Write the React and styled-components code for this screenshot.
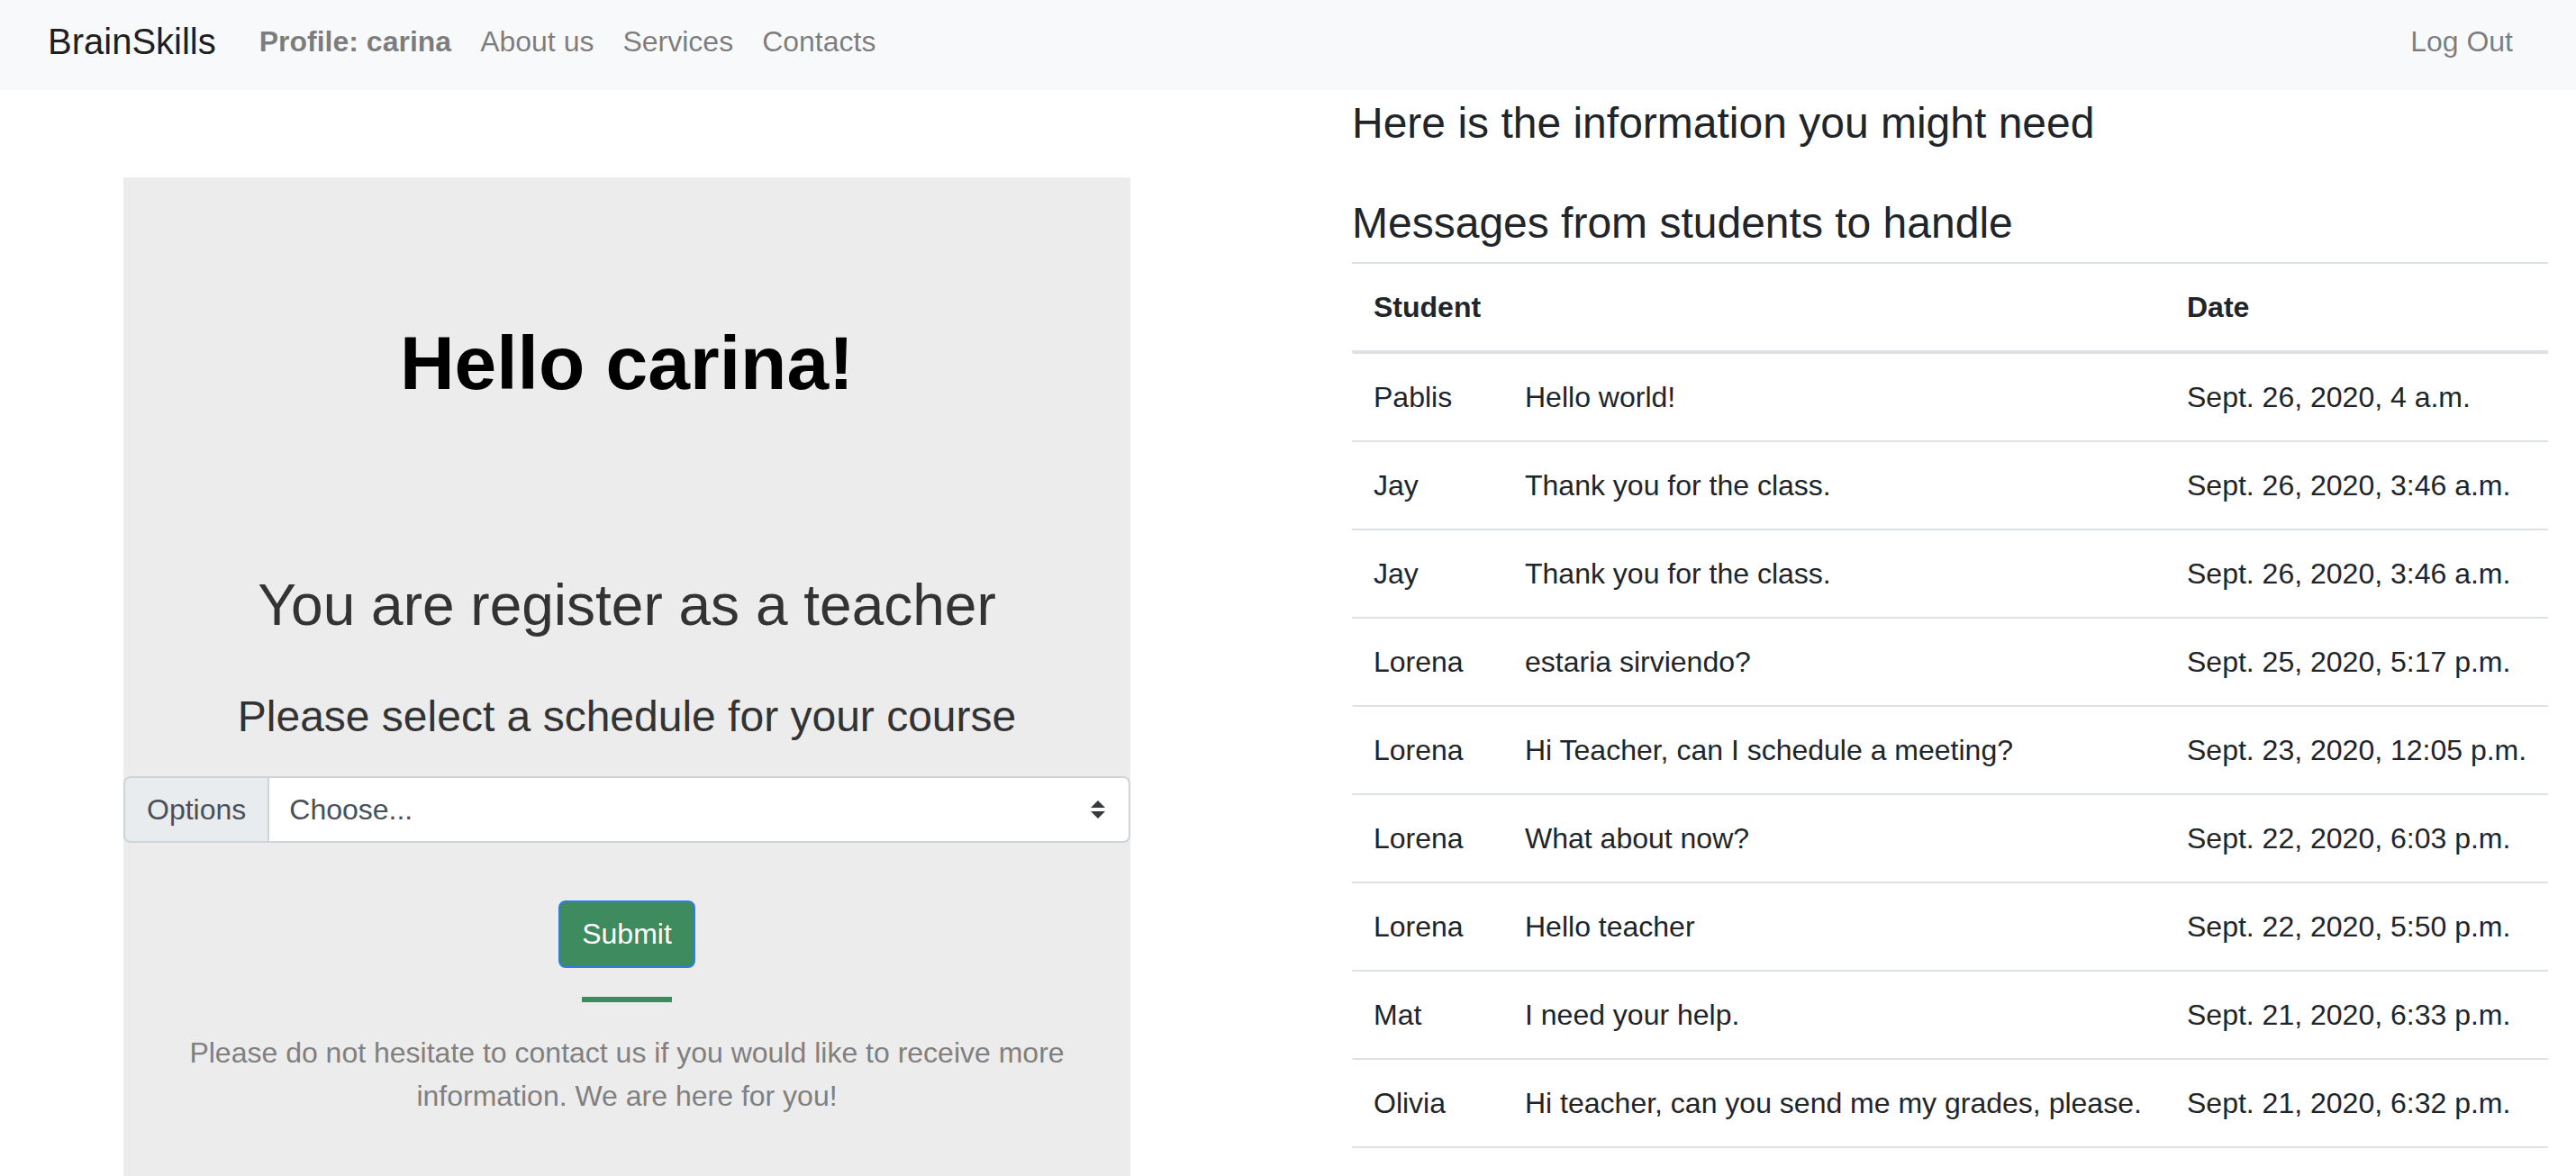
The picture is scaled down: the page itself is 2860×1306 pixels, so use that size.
import React from 'react';
import styled, { createGlobalStyle } from 'styled-components';

const GlobalStyle = createGlobalStyle`
  html { font-size: 32px; }
  body {
    margin: 0;
    font-family: "Liberation Sans", Arial, Helvetica, sans-serif;
    color: #212529;
    line-height: 1.5;
    background: #fff;
  }
  * { box-sizing: border-box; }
`

const Navbar = styled.nav`
  display: flex;
  align-items: center;
  height: 100px;
  padding: 0 54px 9px 53px;
  background-color: #f8f9fa;
`
const Brand = styled.a`
  font-size: 40px;
  color: rgba(0, 0, 0, 0.9);
  margin-right: 32px;
  text-decoration: none;
  line-height: 1.5;
`
const NavLink = styled.a`
  padding: 0 16px;
  font-size: 32px;
  color: rgba(0, 0, 0, 0.5);
  font-weight: ${(props) => (props.bold ? 'bold' : 'normal')};
  margin-left: ${(props) => (props.push ? 'auto' : '0')};
  text-decoration: none;
`

const Main = styled.main`
  display: flex;
  align-items: flex-start;
`
const LeftCol = styled.section`
  padding-left: 137px;
`
const Panel = styled.div`
  width: 1118px;
  margin-top: 97px;
  padding: 156px 0 120px;
  background-color: #ececec;
  text-align: center;
`
const Hello = styled.h1`
  margin: 0;
  font-size: 84px;
  line-height: 100px;
  font-weight: bold;
  color: #000;
`
const Heading = styled.h2`
  margin: ${(props) => props.margin || '0'};
  font-size: ${(props) => props.size || '48px'};
  line-height: 1.2;
  font-weight: 500;
  color: ${(props) => props.color || '#212529'};
`

const InputGroup = styled.div`
  display: flex;
  height: 74px;
  margin-top: 38px;
  text-align: left;
`
const Prepend = styled.div`
  display: flex;
  align-items: center;
  padding: 0 24px;
  background-color: #e9ecef;
  border: 2px solid #ced4da;
  border-radius: 8px 0 0 8px;
  color: #495057;
  font-size: 32px;
`
const Select = styled.div`
  flex: 1;
  display: flex;
  align-items: center;
  justify-content: space-between;
  padding: 0 26px 0 22px;
  background-color: #fff;
  border: 2px solid #ced4da;
  border-left: none;
  border-radius: 0 8px 8px 0;
  color: #495057;
  font-size: 32px;
`

const Button = styled.button`
  display: block;
  margin: 64px auto 0;
  height: 75px;
  padding: 0 24px;
  font-family: inherit;
  font-size: 32px;
  color: #fff;
  background-color: #3d8b5f;
  border: 2px solid #2f7ce8;
  border-radius: 8px;
`
const Divider = styled.div`
  width: 100px;
  height: 6px;
  margin: 32px auto 0;
  background-color: #3d8b5f;
`
const Note = styled.p`
  margin: 32px auto 0;
  padding: 0 48px;
  font-size: 32px;
  line-height: 48px;
  color: #808080;
`

const RightCol = styled.section`
  width: 1328px;
  margin-left: 246px;
`
const Table = styled.table`
  width: 100%;
  border-collapse: collapse;
  table-layout: fixed;
  font-size: 32px;
  line-height: 48px;
  color: #212529;
`
const Th = styled.th`
  text-align: left;
  padding: 24px;
  font-weight: bold;
  border-top: 2px solid #dee2e6;
  border-bottom: 4px solid #dee2e6;
`
const Td = styled.td`
  padding: 24px;
  border-top: 2px solid #dee2e6;
  white-space: nowrap;
  vertical-align: top;
`
const LastRow = styled.tr`
  border-bottom: 2px solid #dee2e6;
`

const messages = [
  ['Pablis', 'Hello world!', 'Sept. 26, 2020, 4 a.m.'],
  ['Jay', 'Thank you for the class.', 'Sept. 26, 2020, 3:46 a.m.'],
  ['Jay', 'Thank you for the class.', 'Sept. 26, 2020, 3:46 a.m.'],
  ['Lorena', 'estaria sirviendo?', 'Sept. 25, 2020, 5:17 p.m.'],
  ['Lorena', 'Hi Teacher, can I schedule a meeting?', 'Sept. 23, 2020, 12:05 p.m.'],
  ['Lorena', 'What about now?', 'Sept. 22, 2020, 6:03 p.m.'],
  ['Lorena', 'Hello teacher', 'Sept. 22, 2020, 5:50 p.m.'],
  ['Mat', 'I need your help.', 'Sept. 21, 2020, 6:33 p.m.'],
  ['Olivia', 'Hi teacher, can you send me my grades, please.', 'Sept. 21, 2020, 6:32 p.m.'],
];

function SelectArrow() {
  return (
    <svg width="16" height="20" viewBox="0 0 4 5">
      <path fill="#343a40" d="M2 0L0 2h4zm0 5L0 3h4z" />
    </svg>
  );
}

export default function App() {
  return (
    <>
      <GlobalStyle />
      <Navbar>
        <Brand href="#">BrainSkills</Brand>
        <NavLink href="#" bold>Profile: carina</NavLink>
        <NavLink href="#">About us</NavLink>
        <NavLink href="#">Services</NavLink>
        <NavLink href="#">Contacts</NavLink>
        <NavLink href="#" push>Log Out</NavLink>
      </Navbar>
      <Main>
        <LeftCol>
          <Panel>
            <Hello>Hello carina!</Hello>
            <Heading size="64px" margin="181px 0 0" color="#333">You are register as a teacher</Heading>
            <Heading margin="56px 0 0" color="#333">Please select a schedule for your course</Heading>
            <InputGroup>
              <Prepend>Options</Prepend>
              <Select>
                <span>Choose...</span>
                <SelectArrow />
              </Select>
            </InputGroup>
            <Button>Submit</Button>
            <Divider />
            <Note>
              Please do not hesitate to contact us if you would like to receive more information. We are here for you!
            </Note>
          </Panel>
        </LeftCol>
        <RightCol>
          <Heading margin="8px 0 0">Here is the information you might need</Heading>
          <Heading margin="53px 0 15px">Messages from students to handle</Heading>
          <Table>
            <colgroup>
              <col style={{ width: '168px' }} />
              <col style={{ width: '735px' }} />
              <col style={{ width: '425px' }} />
            </colgroup>
            <thead>
              <tr>
                <Th>Student</Th>
                <Th></Th>
                <Th>Date</Th>
              </tr>
            </thead>
            <tbody>
              {messages.map(([student, text, date], i) => {
                const Row = i === messages.length - 1 ? LastRow : 'tr';
                return (
                  <Row key={i}>
                    <Td>{student}</Td>
                    <Td>{text}</Td>
                    <Td>{date}</Td>
                  </Row>
                );
              })}
            </tbody>
          </Table>
        </RightCol>
      </Main>
    </>
  );
}
